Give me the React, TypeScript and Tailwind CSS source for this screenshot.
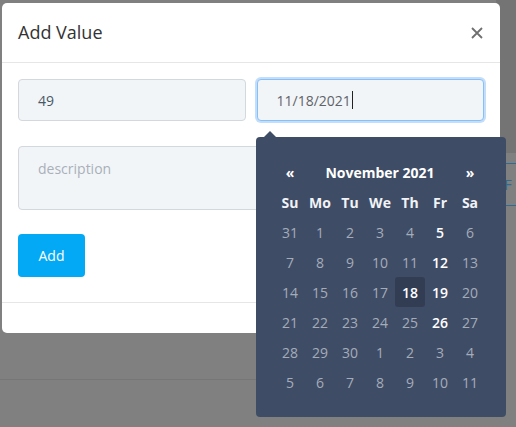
import React from 'react';

const weeks: number[][] = [
    [31, 1, 2, 3, 4, 5, 6],
    [7, 8, 9, 10, 11, 12, 13],
    [14, 15, 16, 17, 18, 19, 20],
    [21, 22, 23, 24, 25, 26, 27],
    [28, 29, 30, 1, 2, 3, 4],
    [5, 6, 7, 8, 9, 10, 11],
];

const dayNames = ['Su', 'Mo', 'Tu', 'We', 'Th', 'Fr', 'Sa'];

function DatePicker() {
    return (
        <div className="absolute left-[256px] top-[137px] w-[250px] h-[280px] bg-[#3f4c66] rounded-[4px] pt-[20px] pl-[19px]">
            {/* little arrow pointing at the input */}
            <div className="absolute -top-[6px] left-[8px] w-0 h-0 border-l-[6px] border-r-[6px] border-b-[6px] border-l-transparent border-r-transparent border-b-[#3f4c66]" />
            <div className="grid grid-cols-7 w-[210px] text-[14px] text-center">
                <div className="h-[30px] flex items-center justify-center font-bold text-white">«</div>
                <div className="col-span-5 h-[30px] flex items-center justify-center font-bold text-white">November 2021</div>
                <div className="h-[30px] flex items-center justify-center font-bold text-white">»</div>
                {dayNames.map((d) => (
                    <div key={d} className="h-[30px] flex items-center justify-center font-bold text-[#f1f3f6]">{d}</div>
                ))}
                {weeks.map((week, wi) =>
                    week.map((day, di) => {
                        const selected = wi === 2 && di === 4;
                        const bright = (wi < 4 && di === 5) || selected;
                        return (
                            <div
                                key={`${wi}-${di}`}
                                className={`h-[30px] flex items-center justify-center rounded-[3px] ${selected ? 'bg-[#323d54]' : ''} ${bright ? 'text-white font-semibold' : 'text-[#a4acba]'}`}
                            >
                                {day}
                            </div>
                        );
                    })
                )}
            </div>
        </div>
    );
}

export default function App() {
    return (
        <div className="relative w-[516px] h-[427px] overflow-hidden bg-[#808080]" style={{ fontFamily: '"Open Sans", sans-serif' }}>
            {/* dimmed page behind the modal */}
            <div className="absolute right-0 top-0 w-[20px] h-[153px] bg-[#747474]" />
            <div className="absolute right-0 top-[163px] w-[20px] h-[43px] border-y border-[#2f6b93] flex items-center pl-[8px] text-[15px] text-[#2f6b93]">F</div>
            <div className="absolute left-0 top-[379px] w-[256px] h-px bg-[#767676]" />

            {/* modal */}
            <div className="absolute left-[2px] top-[3px] w-[498px] h-[330px] bg-white rounded-[5px] flex flex-col">
                <div className="h-[60px] flex items-center justify-between pl-[16px] pr-[17px] border-b border-[#e6e6e6]">
                    <h2 className="text-[18px] text-[#333] pb-[1px]">Add Value</h2>
                    <svg width="12" height="12" viewBox="0 0 12 12" className="text-[#6f6f6f]">
                        <path d="M1 1L11 11M11 1L1 11" stroke="currentColor" strokeWidth="1.8" />
                    </svg>
                </div>

                <div className="px-[16px] pt-[16px] pb-[25px] border-b border-[#e6e6e6]">
                    <div className="grid grid-cols-2 gap-[11px]">
                        <div className="h-[42px] flex items-center pl-[19px] bg-[#f2f5f8] border border-[#d3d8de] rounded-[4px] text-[14px] text-[#4a5866]">
                            49
                        </div>
                        <div className="h-[42px] flex items-center pl-[19px] bg-[#f2f5f8] border border-[#86c0f6] shadow-[0_0_0_2px_#c2defb] rounded-[4px] text-[14px] text-[#5f6368]">
                            11/18/2021
                            <span className="inline-block w-px h-[18px] bg-[#222] ml-[1px]" />
                        </div>
                    </div>
                    <div className="mt-[25px] h-[64px] pl-[19px] pt-[11px] bg-[#f2f5f8] border border-[#d3d8de] rounded-[4px] text-[14px] text-[#a9b0b9]">
                        description
                    </div>
                    <button className="mt-[24px] w-[67px] h-[43px] bg-[#03a9f4] rounded-[4px] text-white text-[14px] align-top">
                        Add
                    </button>
                </div>
            </div>

            <DatePicker />
        </div>
    );
}
